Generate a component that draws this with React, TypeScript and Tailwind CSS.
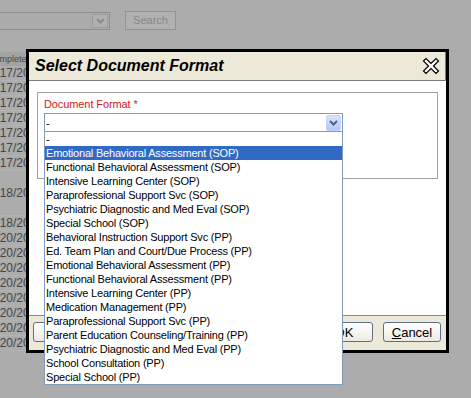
import React from "react";

const options = [
  "-",
  "Emotional Behavioral Assessment (SOP)",
  "Functional Behavioral Assessment (SOP)",
  "Intensive Learning Center (SOP)",
  "Paraprofessional Support Svc (SOP)",
  "Psychiatric Diagnostic and Med Eval (SOP)",
  "Special School (SOP)",
  "Behavioral Instruction Support Svc (PP)",
  "Ed. Team Plan and Court/Due Process (PP)",
  "Emotional Behavioral Assessment (PP)",
  "Functional Behavioral Assessment (PP)",
  "Intensive Learning Center (PP)",
  "Medication Management (PP)",
  "Paraprofessional Support Svc (PP)",
  "Parent Education Counseling/Training (PP)",
  "Psychiatric Diagnostic and Med Eval (PP)",
  "School Consultation (PP)",
  "Special School (PP)",
];

const bgRows = [
  { date: "02/17/2011", tall: false },
  { date: "02/17/2011", tall: false },
  { date: "02/17/2011", tall: false },
  { date: "02/17/2011", tall: false },
  { date: "02/17/2011", tall: false },
  { date: "02/17/2011", tall: false },
  { date: "02/17/2011", tall: false },
  { date: "02/18/2011", tall: true },
  { date: "02/18/2011", tall: false },
  { date: "02/20/2011", tall: false },
  { date: "02/20/2011", tall: false },
  { date: "02/20/2011", tall: false },
  { date: "02/20/2011", tall: false },
  { date: "02/20/2011", tall: false },
  { date: "02/20/2011", tall: false },
  { date: "02/20/2011", tall: false },
  { date: "02/20/2011", tall: false },
];

function Chevron({ color }: { color: string }) {
  return (
    <svg width="9" height="6" viewBox="0 0 9 6">
      <path d="M1 1 L4.5 4.5 L8 1" fill="none" stroke={color} strokeWidth="2" />
    </svg>
  );
}

function CloseIcon() {
  return (
    <svg width="18" height="18" viewBox="0 0 18 18">
      <path
        d="M1.5 4 L4 1.5 L9 6.5 L14 1.5 L16.5 4 L11.5 9 L16.5 14 L14 16.5 L9 11.5 L4 16.5 L1.5 14 L6.5 9 Z"
        fill="white"
        stroke="black"
        strokeWidth="1.2"
        strokeLinejoin="miter"
      />
    </svg>
  );
}

export default function App() {
  return (
    <div className="relative h-[398px] w-[471px] overflow-hidden bg-[#acacac] font-['Liberation_Sans',Arial,sans-serif]">
      {/* page behind the overlay */}
      <div className="flex items-start pt-[11px]">
        <div className="ml-[-20px] mt-[1px] flex h-[18px] w-[130px] items-center justify-end border border-[#8e8e8e] bg-[#ababab] pr-[1px]">
          <div className="flex h-[14px] w-[16px] items-center justify-center border border-[#9d9d9d] bg-[#b0b0b0]">
            <Chevron color="#8a8a8a" />
          </div>
        </div>
        <div className="ml-[15px] flex h-[19px] w-[51px] items-center justify-center border border-[#939393] bg-[#b1b1b1] text-[11px] text-[#878787]">
          Search
        </div>
      </div>

      <div className="ml-[-17px] mt-[22px] w-[120px] text-[12px] text-[#454545]">
        <div className="h-[14px] bg-[#a3a3a3] pl-[5px] text-[9px] leading-[14px]">Completed</div>
        {bgRows.map((r, i) => (
          <div
            key={i}
            className={`flex items-center border-b border-[#b3b3b3] ${r.tall ? "h-[45px]" : "h-[15px]"}`}
          >
            {r.date}
          </div>
        ))}
      </div>

      {/* modal */}
      <div className="absolute left-[26px] top-[49px] w-[423px] border-[3px] border-black bg-white">
        <div className="flex h-[29px] items-center justify-between border-b border-r border-[#7c7c7c] bg-[#ece9d8] pl-[6px] pr-[5px]">
          <span className="text-[16px] font-bold italic text-black">Select Document Format</span>
          <CloseIcon />
        </div>

        <div className="h-[234px] px-[8px] pt-[11px]">
          <div className="h-[87px] border border-[#a0a0a0] px-[6px] pt-[5px]">
            <div className="text-[11px] leading-[13px] tracking-[-0.1px] text-[#d01818]">Document Format *</div>
            <div className="relative mt-[2px] flex h-[20px] w-[299px] items-center justify-between border border-[#7f9db9] bg-white pl-[1px] pr-[1px] text-[11px] text-black">
              <span>-</span>
              <div className="flex h-[16px] w-[15px] items-center justify-center rounded-[2px] border border-[#c3d3fd] bg-gradient-to-b from-[#d8e4fc] to-[#b4c8f6]">
                <Chevron color="#4d6185" />
              </div>
              <div className="absolute left-[-1px] top-[17px] z-10 w-[299px] border border-[#7f9db9] bg-white">
                {options.map((o, i) => (
                  <div
                    key={i}
                    className={`h-[14px] whitespace-nowrap px-[1px] text-[11px] leading-[14px] tracking-[-0.2px] ${
                      i === 1 ? "bg-[#316ac5] text-white" : "text-black"
                    }`}
                  >
                    {o}
                  </div>
                ))}
              </div>
            </div>
          </div>
        </div>

        <div className="flex h-[35px] items-start justify-between border-t border-[#8a8a8a] bg-[#ece9d8] pl-[4px] pr-[5px] pt-[6px]">
          <button className="h-[20px] w-[60px] rounded-[3px] border border-[#5d6f87] bg-gradient-to-b from-white to-[#eceae2]" />
          <div className="flex gap-[10px]">
            <button className="h-[20px] w-[58px] rounded-[3px] border border-[#5d6f87] bg-gradient-to-b from-white to-[#eceae2] text-[13px] text-black">
              OK
            </button>
            <button className="h-[20px] w-[58px] rounded-[3px] border border-[#5d6f87] bg-gradient-to-b from-white to-[#eceae2] text-[13px] text-black">
              <span className="underline">C</span>ancel
            </button>
          </div>
        </div>
      </div>
    </div>
  );
}
